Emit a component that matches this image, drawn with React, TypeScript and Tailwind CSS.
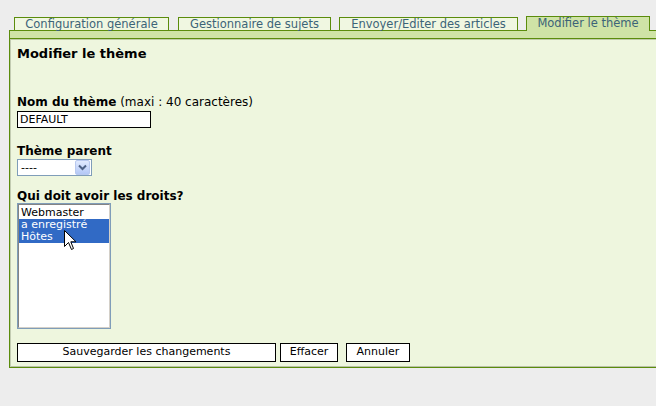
import React from "react";

const font = { fontFamily: '"DejaVu Sans", Verdana, sans-serif' };

function Tab({ label, w, ml, active }: { label: string; w: number; ml: number; active?: boolean }) {
  return (
    <div
      className={
        active
          ? "relative z-10 mb-[-1px] h-[15px] border-x border-t border-[#5b8c0c] bg-[#cfe3a6] text-center text-[11.5px] leading-[13px] text-[#3c6478]"
          : "h-[13px] border-x border-t border-[#5b8c0c] bg-[#f0f7e1] text-center text-[11.5px] leading-[13px] text-[#3c6478]"
      }
      style={{ width: w, marginLeft: ml }}
    >
      {label}
    </div>
  );
}

export default function App() {
  return (
    <div className="h-[406px] w-[656px] overflow-hidden bg-[#ededed]" style={font}>
      <div className="flex h-[30px] items-end">
        <Tab label="Configuration générale" w={155} ml={14} />
        <Tab label="Gestionnaire de sujets" w={153} ml={9} />
        <Tab label="Envoyer/Editer des articles" w={179} ml={8} />
        <Tab label="Modifier le thème" w={124} ml={8} active />
      </div>
      <div className="ml-[9px] w-[660px] border-b border-l border-[#5b8c0c] bg-[#eef6de] shadow-[inset_1px_0_0_#c3ccb2,inset_0_-1px_0_#b9c2a6]">
        <div className="h-[9px] border-y border-[#5b8c0c] bg-[#cfe3a6]" />
        <div className="h-[1px] bg-[#c0cba9]" />
        <div className="pl-[7px] pb-[5px] text-black">
          <div className="mt-[6px] h-[16px] text-[13px] font-bold leading-[16px]">Modifier le thème</div>
          <div className="mt-[33px] h-[15px] text-[12px] leading-[15px]">
            <span className="font-bold">Nom du thème</span> (maxi : 40 caractères)
          </div>
          <div className="mt-[1px] h-[17px] w-[134px] border border-black bg-white pl-[2px] text-[11px] leading-[15px]">
            DEFAULT
          </div>
          <div className="mt-[16px] h-[15px] text-[12px] font-bold leading-[15px]">Thème parent</div>
          <div className="flex h-[17px] w-[75px] items-center border border-[#7f9db9] bg-white">
            <span className="flex-1 pl-[3px] text-[11px] leading-[14px]">----</span>
            <div className="mr-[1px] flex h-[15px] w-[15px] items-center justify-center rounded-[2px] border border-[#b9c9ef] bg-gradient-to-b from-[#e1eafe] to-[#b4c8f6]">
              <svg width="9" height="7" viewBox="0 0 9 7">
                <path d="M1 1.5 L4.5 5 L8 1.5" fill="none" stroke="#4d6185" strokeWidth="2" />
              </svg>
            </div>
          </div>
          <div className="mt-[13px] h-[14px] text-[12px] font-bold leading-[14px]">Qui doit avoir les droits?</div>
          <div className="relative h-[126px] w-[94px] border border-[#7f9db9] bg-white">
            <div className="h-full w-full border border-[#848484] border-b-[#d4d0c8] border-r-[#d4d0c8] pt-[2px] text-[11px] leading-[12px]">
              <div className="pl-[2px]">Webmaster</div>
              <div className="bg-[#316ac5] pl-[2px] text-white">a enregistré</div>
              <div className="bg-[#316ac5] pl-[2px] text-white">Hôtes</div>
            </div>
            <svg className="absolute left-[46px] top-[26px]" width="13" height="21" viewBox="0 0 13 21">
              <path
                d="M0.5 0.5 L0.5 16.5 L4.5 12.5 L7.5 19.5 L9.5 18.5 L6.8 11.8 L12 11.8 Z"
                fill="white"
                stroke="black"
                strokeWidth="1"
              />
            </svg>
          </div>
          <div className="mt-[14px] flex items-center text-[11px] leading-[16px]">
            <div className="h-[19px] w-[259px] border border-black bg-white text-center">Sauvegarder les changements</div>
            <div className="ml-[4px] h-[19px] w-[58px] border border-black bg-white text-center">Effacer</div>
            <div className="ml-[8px] h-[19px] w-[64px] border border-black bg-white text-center">Annuler</div>
          </div>
        </div>
      </div>
    </div>
  );
}
